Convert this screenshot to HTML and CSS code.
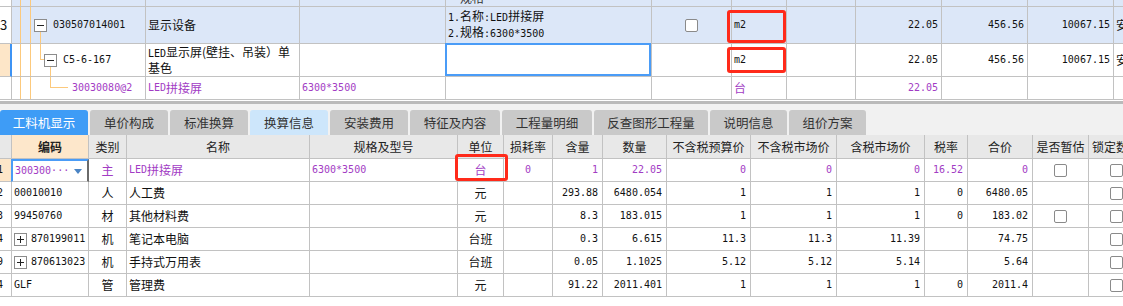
FILE: index.html
```html
<!DOCTYPE html>
<html lang="zh-CN">
<head>
  <meta charset="UTF-8">
  <title>清单组价</title>
  <link rel="stylesheet" href="styles.css">
</head>
<body>
  <!-- upper grid: bill items -->
  <div class="top">
    <div class="row hl first">
      <div class="c"></div>
      <div class="c tree"><i class="ind"></i><i class="g"></i><i class="g"></i></div>
      <div class="c"></div>
      <div class="c"></div>
      <div class="c peek"><span>规格</span></div>
      <div class="c"></div>
      <div class="c"></div>
      <div class="c"></div>
      <div class="c"></div>
      <div class="c"></div>
      <div class="c"></div>
      <div class="c"></div>
    </div>

    <div class="row hl">
      <div class="c rn">3</div>
      <div class="c tree">
        <i class="ind"></i><i class="g"></i><i class="g g4"></i>
        <span class="node has-kids">
          <i class="up"></i>
          <svg class="box" width="13" height="13" viewBox="0 0 13 13"><rect x="0.5" y="0.5" width="12" height="12" fill="#fff" stroke="#8c8c8c"/><path d="M3 6.5h7" stroke="#222"/></svg>
          <i class="down"></i>
        </span>
        <span class="n code">030507014001</span>
      </div>
      <div class="c">显示设备</div>
      <div class="c"></div>
      <div class="c lines"><span><span class="n">1.</span>名称<span class="n">:LED</span>拼接屏</span><span><span class="n">2.</span>规格<span class="n">:6300*3500</span></span></div>
      <div class="c mid"><span class="cb"></span></div>
      <div class="c mark m1"><span class="n">m2</span></div>
      <div class="c"></div>
      <div class="c num n">22.05</div>
      <div class="c num n">456.56</div>
      <div class="c num n">10067.15</div>
      <div class="c">安</div>
    </div>

    <div class="row">
      <div class="c rn cur"></div>
      <div class="c tree">
        <i class="ind"></i><i class="g"></i><i class="g"></i>
        <span class="elbow w4"><i></i></span>
        <span class="node has-kids">
          <i class="up"></i>
          <svg class="box" width="13" height="13" viewBox="0 0 13 13"><rect x="0.5" y="0.5" width="12" height="12" fill="#fff" stroke="#8c8c8c"/><path d="M3 6.5h7" stroke="#222"/></svg>
          <i class="down"></i>
        </span>
        <span class="n code">C5-6-167</span>
      </div>
      <div class="c lines"><span><span class="n">LED</span>显示屏(壁挂、吊装）单</span><span>基色</span></div>
      <div class="c"></div>
      <div class="c picked"></div>
      <div class="c"></div>
      <div class="c mark m2"><span class="n">m2</span></div>
      <div class="c"></div>
      <div class="c num n">22.05</div>
      <div class="c num n">456.56</div>
      <div class="c num n">10067.15</div>
      <div class="c">安</div>
    </div>

    <div class="row pu">
      <div class="c"></div>
      <div class="c tree">
        <i class="ind"></i><i class="g"></i><i class="g g20"></i>
        <span class="elbow w18"><i></i></span>
        <span class="n leaf">30030080@2</span>
      </div>
      <div class="c"><span class="n">LED</span>拼接屏</div>
      <div class="c n">6300*3500</div>
      <div class="c"></div>
      <div class="c"></div>
      <div class="c">台</div>
      <div class="c"></div>
      <div class="c num n">22.05</div>
      <div class="c"></div>
      <div class="c"></div>
      <div class="c"></div>
    </div>
  </div>

  <div class="splitter"></div>

  <!-- tabs -->
  <div class="tabs">
    <div class="tab active w88">工料机显示</div>
    <div class="tab w78">单价构成</div>
    <div class="tab w78">标准换算</div>
    <div class="tab soft w78">换算信息</div>
    <div class="tab w78">安装费用</div>
    <div class="tab w90">特征及内容</div>
    <div class="tab w90">工程量明细</div>
    <div class="tab w114">反查图形工程量</div>
    <div class="tab w77">说明信息</div>
    <div class="tab w77">组价方案</div>
  </div>

  <!-- lower grid: labour, material, machine -->
  <div class="grid">
    <div class="row head">
      <div class="c"></div>
      <div class="c key">编码</div>
      <div class="c">类别</div>
      <div class="c">名称</div>
      <div class="c">规格及型号</div>
      <div class="c">单位</div>
      <div class="c">损耗率</div>
      <div class="c">含量</div>
      <div class="c">数量</div>
      <div class="c">不含税预算价</div>
      <div class="c">不含税市场价</div>
      <div class="c">含税市场价</div>
      <div class="c">税率</div>
      <div class="c">合价</div>
      <div class="c">是否暂估</div>
      <div class="c left">锁定数量</div>
    </div>

    <div class="row pu">
      <div class="c rn cur"><span class="n">1</span></div>
      <div class="c editing"><span class="n">300300···</span><i class="drop"></i></div>
      <div class="c mid">主</div>
      <div class="c"><span class="n">LED</span>拼接屏</div>
      <div class="c n">6300*3500</div>
      <div class="c mid mark m3">台</div>
      <div class="c mid n">0</div>
      <div class="c num n">1</div>
      <div class="c num n">22.05</div>
      <div class="c num n">0</div>
      <div class="c num n">0</div>
      <div class="c num n">0</div>
      <div class="c num n">16.52</div>
      <div class="c num n">0</div>
      <div class="c mid"><span class="cb"></span></div>
      <div class="c lock"><span class="cb"></span></div>
    </div>

    <div class="row">
      <div class="c rn"><span class="n">2</span></div>
      <div class="c n">00010010</div>
      <div class="c mid">人</div>
      <div class="c">人工费</div>
      <div class="c"></div>
      <div class="c mid">元</div>
      <div class="c"></div>
      <div class="c num n">293.88</div>
      <div class="c num n">6480.054</div>
      <div class="c num n">1</div>
      <div class="c num n">1</div>
      <div class="c num n">1</div>
      <div class="c num n">0</div>
      <div class="c num n">6480.05</div>
      <div class="c"></div>
      <div class="c lock"><span class="cb"></span></div>
    </div>

    <div class="row">
      <div class="c rn"><span class="n">3</span></div>
      <div class="c n">99450760</div>
      <div class="c mid">材</div>
      <div class="c">其他材料费</div>
      <div class="c"></div>
      <div class="c mid">元</div>
      <div class="c"></div>
      <div class="c num n">8.3</div>
      <div class="c num n">183.015</div>
      <div class="c num n">1</div>
      <div class="c num n">1</div>
      <div class="c num n">1</div>
      <div class="c num n">0</div>
      <div class="c num n">183.02</div>
      <div class="c mid"><span class="cb"></span></div>
      <div class="c lock"><span class="cb"></span></div>
    </div>

    <div class="row">
      <div class="c rn"><span class="n">4</span></div>
      <div class="c">
        <svg class="box" width="13" height="13" viewBox="0 0 13 13"><rect x="0.5" y="0.5" width="12" height="12" fill="#fff" stroke="#8c8c8c"/><path d="M3 6.5h7M6.5 3v7" stroke="#222"/></svg>
        <span class="n code">870199011</span>
      </div>
      <div class="c mid">机</div>
      <div class="c">笔记本电脑</div>
      <div class="c"></div>
      <div class="c mid">台班</div>
      <div class="c"></div>
      <div class="c num n">0.3</div>
      <div class="c num n">6.615</div>
      <div class="c num n">11.3</div>
      <div class="c num n">11.3</div>
      <div class="c num n">11.39</div>
      <div class="c"></div>
      <div class="c num n">74.75</div>
      <div class="c"></div>
      <div class="c lock"><span class="cb"></span></div>
    </div>

    <div class="row">
      <div class="c rn"><span class="n">9</span></div>
      <div class="c">
        <svg class="box" width="13" height="13" viewBox="0 0 13 13"><rect x="0.5" y="0.5" width="12" height="12" fill="#fff" stroke="#8c8c8c"/><path d="M3 6.5h7M6.5 3v7" stroke="#222"/></svg>
        <span class="n code">870613023</span>
      </div>
      <div class="c mid">机</div>
      <div class="c">手持式万用表</div>
      <div class="c"></div>
      <div class="c mid">台班</div>
      <div class="c"></div>
      <div class="c num n">0.05</div>
      <div class="c num n">1.1025</div>
      <div class="c num n">5.12</div>
      <div class="c num n">5.12</div>
      <div class="c num n">5.14</div>
      <div class="c"></div>
      <div class="c num n">5.64</div>
      <div class="c"></div>
      <div class="c lock"><span class="cb"></span></div>
    </div>

    <div class="row">
      <div class="c rn"><span class="n">4</span></div>
      <div class="c n">GLF</div>
      <div class="c mid">管</div>
      <div class="c">管理费</div>
      <div class="c"></div>
      <div class="c mid">元</div>
      <div class="c"></div>
      <div class="c num n">91.22</div>
      <div class="c num n">2011.401</div>
      <div class="c num n">1</div>
      <div class="c num n">1</div>
      <div class="c num n">1</div>
      <div class="c num n">0</div>
      <div class="c num n">2011.4</div>
      <div class="c"></div>
      <div class="c lock"><span class="cb"></span></div>
    </div>
  </div>
</body>
</html>
```

FILE: styles.css
```css
* {
  box-sizing: border-box;
}

body {
  margin: 0;
  width: 1123px;
  height: 306px;
  overflow: hidden;
  background: #fff;
  color: #111;
  font-family: "Noto Sans CJK SC", "Noto Sans", sans-serif;
  font-size: 12px;
}

i {
  display: block;
}

.n {
  font-family: "DejaVu Sans Mono", "Liberation Mono", monospace;
  font-size: 10px;
}

.row {
  display: contents;
}

.c {
  display: flex;
  align-items: center;
  padding: 0 2px;
  border-right: 1px solid #c2c2c2;
  border-bottom: 1px solid #c2c2c2;
  white-space: nowrap;
  overflow: hidden;
  line-height: 14px;
}

.mid {
  justify-content: center;
}

.num {
  justify-content: flex-end;
  padding-right: 3px;
}

.pu .c,
.pu .c .n {
  color: #a23cc4;
}

/* ---------- upper grid ---------- */

.top {
  display: grid;
  grid-template-columns: 12px 134px 154px 146px 206px 80px 55px 69px 86px 86px 86px 40px;
  grid-template-rows: 7px 37px 33px 23px;
  width: 1160px;
}

.hl .c {
  background: #dce7f8;
}

.hl .c:first-child {
  background: #fff;
}

.rn {
  padding: 0;
  font-size: 13px;
}

.rn.cur,
.hl .rn.cur {
  background: #fde6c8;
}

.top .rn.cur {
  border-right: 2px solid #3d93f4;
}

.peek {
  align-items: flex-end;
  padding-left: 14px;
  color: #333;
}

.peek span {
  line-height: 12px;
  margin-bottom: 2px;
}

.top .c.tree {
  padding: 0;
  align-items: stretch;
  overflow: visible;
}

.tree .ind {
  width: 8px;
  flex: none;
}

.tree .g {
  width: 10px;
  flex: none;
  border-left: 1px solid #fcc97c;
}

.tree .g4 {
  width: 4px;
}

.tree .g20 {
  width: 20px;
}

.elbow {
  display: flex;
  flex-direction: column;
  flex: none;
}

.elbow i {
  height: 50%;
  border-left: 1px solid #fcc97c;
  border-bottom: 1px solid #fcc97c;
}

.elbow.w4 {
  width: 4px;
}

.elbow.w18 {
  width: 18px;
}

.node {
  display: flex;
  flex-direction: column;
  width: 13px;
  flex: none;
}

.node .up,
.node .down {
  flex: 1;
}

.node .down {
  margin-left: 6px;
  border-left: 1px solid #fcc97c;
}

.box {
  display: block;
  flex: none;
}

.tree .code {
  align-self: center;
  margin-left: 6px;
}

.tree .leaf {
  align-self: center;
  margin-left: 4px;
}

.lines {
  flex-direction: column;
  align-items: flex-start;
  justify-content: center;
}

.cb {
  display: block;
  width: 13px;
  height: 13px;
  border: 1px solid #8a8a8a;
  border-radius: 2px;
  background: #fff;
}

.mark {
  position: relative;
  overflow: visible;
  padding-left: 2px;
}

.mark::after {
  content: "";
  position: absolute;
  border: 3px solid #ff2a1a;
  border-radius: 3px;
  z-index: 2;
}

.m1::after {
  top: 3px;
  bottom: 0;
  left: -5px;
  right: 0;
}

.m2::after {
  top: 3px;
  bottom: 3px;
  left: -5px;
  right: 0;
}

.m3::after {
  top: -5px;
  bottom: 0;
  left: -3px;
  right: -5px;
}

.picked {
  position: relative;
  overflow: visible;
}

.picked::after {
  content: "";
  position: absolute;
  top: -1px;
  left: -1px;
  right: 0;
  bottom: 0;
  border: 2px solid #4a9cf7;
  z-index: 2;
}

/* ---------- tabs ---------- */

.splitter {
  height: 3px;
  margin-top: 1px;
  background: #bababa;
}

.tabs {
  display: flex;
  align-items: flex-end;
  gap: 2px;
  height: 31px;
  padding-top: 6px;
  background: #f1f1f1;
}

.tab {
  height: 25px;
  display: flex;
  align-items: center;
  justify-content: center;
  border-radius: 3px 3px 0 0;
  background: #c9c9c9;
  color: #333;
  font-size: 12.5px;
  flex: none;
}

.tab.active {
  background: #3e9cf6;
  color: #fff;
}

.tab.soft {
  background: #cde6fb;
}

.w88 { width: 88px; }
.w78 { width: 78px; }
.w90 { width: 90px; }
.w114 { width: 114px; }
.w77 { width: 77px; }

/* ---------- lower grid ---------- */

.grid {
  display: grid;
  grid-template-columns: 12px 77px 38px 183px 148px 46px 49px 50px 64px 84px 86px 88px 43px 65px 56px 40px;
  grid-template-rows: 24px repeat(6, 23px);
  width: 1160px;
}

.grid .num {
  padding-right: 4px;
}

.head .c {
  background: #e8e8e8;
  justify-content: center;
  color: #222;
}

.head .c.key {
  background: #fde7cb;
  font-weight: bold;
}

.head .c.left {
  justify-content: flex-start;
  padding-left: 3px;
}

.grid .rn {
  justify-content: flex-start;
}

.grid .rn .n {
  margin-left: -3px;
  font-size: 10px;
}

.pu .rn .n {
  color: #111;
}

.editing {
  border-left: 2px solid #4a9cf7;
  border-top: 2px solid #4a9cf7;
  border-right: 2px solid #6a6a6a;
  margin-left: -1px;
  justify-content: space-between;
  padding-right: 5px;
}

.drop {
  width: 0;
  height: 0;
  border-left: 4px solid transparent;
  border-right: 4px solid transparent;
  border-top: 5px solid #4a84c4;
}

.grid .box {
  margin-right: 4px;
}

.lock {
  padding-left: 21px;
}
```
